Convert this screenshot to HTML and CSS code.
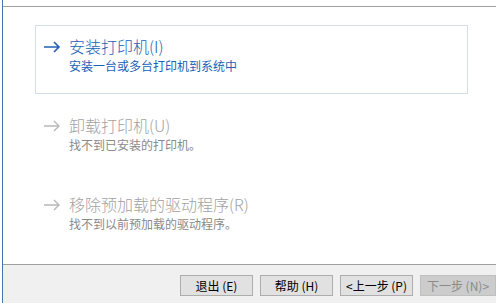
FILE: index.html
```html
<!DOCTYPE html>
<html lang="zh-CN">
<head>
  <meta charset="UTF-8">
  <title>打印机</title>
  <link rel="stylesheet" href="styles.css">
</head>
<body>

  <div class="window">
    <div class="top-bar"></div>

    <div class="tasks">
      <!-- Install -->
      <div class="task active">
        <svg class="arrow" width="18" height="12" viewBox="0 0 18 12">
          <path d="M1 6 H16 M11 1 L16 6 L11 11" fill="none" stroke="currentColor" stroke-width="1.6"/>
        </svg>
        <div class="task-text">
          <div class="task-title">安装打印机(I)</div>
          <div class="task-desc">安装一台或多台打印机到系统中</div>
        </div>
      </div>

      <!-- Uninstall -->
      <div class="task disabled">
        <svg class="arrow" width="18" height="12" viewBox="0 0 18 12">
          <path d="M1 6 H16 M11 1 L16 6 L11 11" fill="none" stroke="currentColor" stroke-width="1.4"/>
        </svg>
        <div class="task-text">
          <div class="task-title">卸载打印机(U)</div>
          <div class="task-desc">找不到已安装的打印机。</div>
        </div>
      </div>

      <!-- Remove driver -->
      <div class="task disabled">
        <svg class="arrow" width="18" height="12" viewBox="0 0 18 12">
          <path d="M1 6 H16 M11 1 L16 6 L11 11" fill="none" stroke="currentColor" stroke-width="1.4"/>
        </svg>
        <div class="task-text">
          <div class="task-title">移除预加载的驱动程序(R)</div>
          <div class="task-desc">找不到以前预加载的驱动程序。</div>
        </div>
      </div>
    </div>

    <div class="footer">
      <button>退出 (E)</button>
      <button>帮助 (H)</button>
      <button>&lt;上一步 (P)</button>
      <button disabled>下一步 (N)&gt;</button>
    </div>
  </div>

</body>
</html>
```

FILE: styles.css
```css
body {
  margin: 0;
  background: #fff;
  font-family: "Noto Sans CJK SC", "Noto Sans", sans-serif;
}

.window {
  margin-left: 2px;
  height: 303px;
  border-left: 1px solid #4178b2;
  display: flex;
  flex-direction: column;
  overflow: hidden;
}

.top-bar {
  height: 6px;
  border-bottom: 1px solid #a0a0a0;
}

.tasks {
  flex: 1;
  margin: 18px 0 0 32px;
  display: flex;
  flex-direction: column;
  gap: 10px;
}

.task {
  width: 417px;
  display: flex;
  gap: 8px;
  padding: 9px 7px 19px;
  border: 1px solid transparent;
}

.task.active {
  border-color: #d3dee6;
  color: #2160b6;
}

.task.disabled {
  color: #a2a2a2;
}

.arrow {
  flex: none;
  margin-top: 6px;
}

.task.disabled .arrow {
  color: #b8b8b8;
}

.task-title {
  font-size: 16px;
  font-weight: 300;
  line-height: 22px;
}

.task-desc {
  font-size: 12px;
  line-height: 17px;
}

.task.disabled .task-desc {
  color: #8a8a8a;
}

.footer {
  height: 39px;
  border-top: 1px solid #a0a0a0;
  background: #f0f0f0;
  display: flex;
  gap: 7px;
  padding: 10px 0 0 177px;
  box-sizing: border-box;
}

button {
  flex: none;
  width: 73px;
  height: 21px;
  padding: 0;
  border: 1px solid #adadad;
  background: #e1e1e1;
  font-family: "Noto Sans CJK SC", sans-serif;
  font-size: 12px;
  color: #000;
}

button:disabled {
  width: 76px;
  background: #cccccc;
  border-color: #bfbfbf;
  color: #8a8a8a;
}
```
